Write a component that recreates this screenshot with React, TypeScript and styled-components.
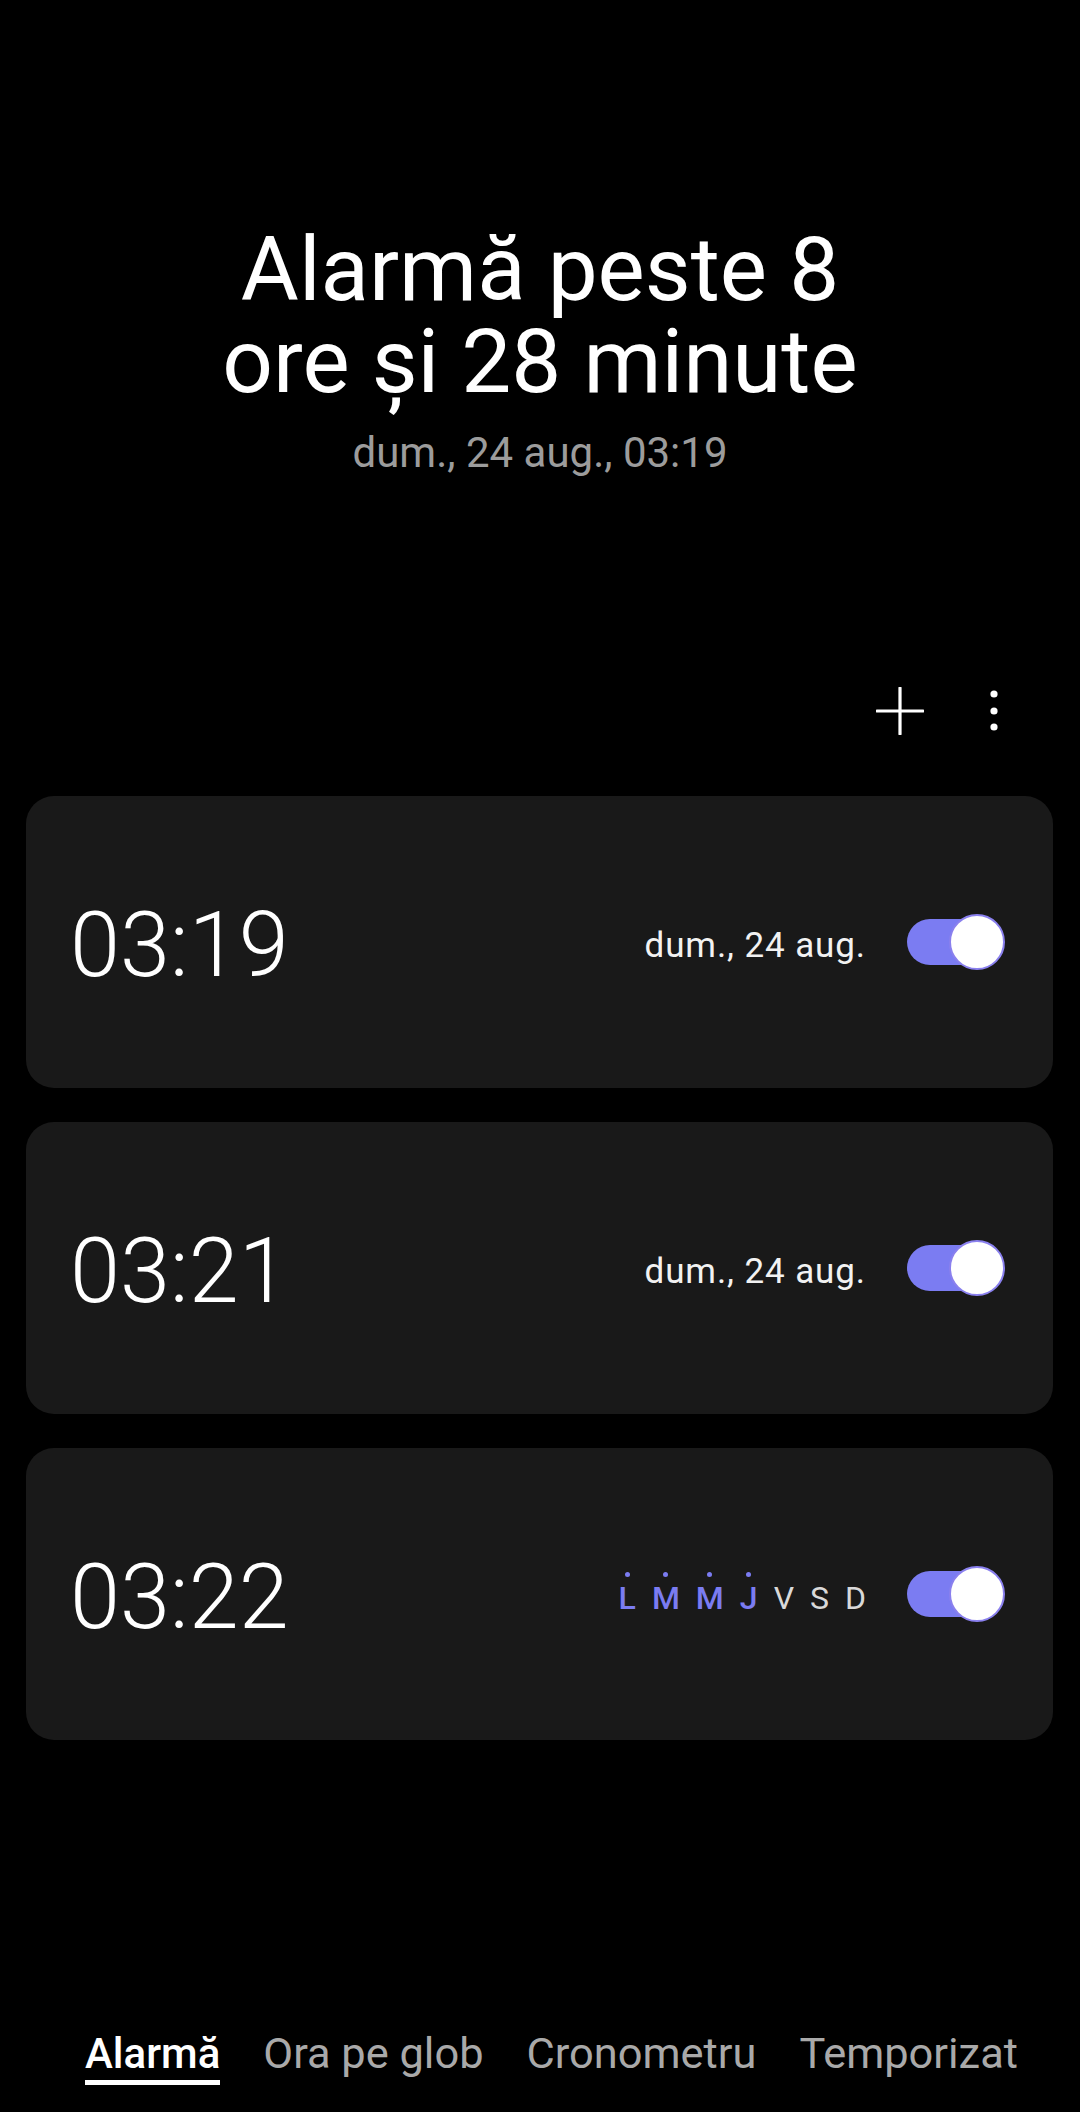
import * as React from 'react'
import styled, { createGlobalStyle } from 'styled-components'

interface Day {
  label: string
  active: boolean
}

interface Alarm {
  id: number
  time: string
  date?: string
  days?: Day[]
  enabled: boolean
}

const weekDays: Day[] = [
  { label: 'L', active: true },
  { label: 'M', active: true },
  { label: 'M', active: true },
  { label: 'J', active: true },
  { label: 'V', active: false },
  { label: 'S', active: false },
  { label: 'D', active: false }
]

const alarms: Alarm[] = [
  { id: 1, time: '03:19', date: 'dum., 24 aug.', enabled: true },
  { id: 2, time: '03:21', date: 'dum., 24 aug.', enabled: true },
  { id: 3, time: '03:22', days: weekDays, enabled: true }
]

const tabs = ['Alarmă', 'Ora pe glob', 'Cronometru', 'Temporizat']

export default function App () {
  const [active, setActive] = React.useState(0)

  return (
    <Page>
      <GlobalStyle />
      <Header>
        <TitleLine>Alarmă peste 8</TitleLine>
        <TitleLine>ore și 28 minute</TitleLine>
        <Subtitle>dum., 24 aug., 03:19</Subtitle>
      </Header>

      <Toolbar>
        <IconButton aria-label='Adaugă alarmă'>
          <svg width='48' height='48' viewBox='0 0 48 48'>
            <path d='M24 1v46M1 24h46' stroke='#fff' strokeWidth='3.2' strokeLinecap='round' />
          </svg>
        </IconButton>
        <IconButton aria-label='Mai multe opțiuni'>
          <svg width='10' height='44' viewBox='0 0 10 44'>
            <circle cx='5' cy='5' r='3.6' fill='#fff' />
            <circle cx='5' cy='22' r='3.6' fill='#fff' />
            <circle cx='5' cy='38' r='3.6' fill='#fff' />
          </svg>
        </IconButton>
      </Toolbar>

      <List>
        {alarms.map(a => (
          <Card key={a.id}>
            <Time>{a.time}</Time>
            <Right>
              {a.date && <DateText>{a.date}</DateText>}
              {a.days && (
                <Days>
                  {a.days.map((d, i) => (
                    <DayLetter key={i} active={d.active}>{d.label}</DayLetter>
                  ))}
                </Days>
              )}
              <Switch on={a.enabled}>
                <Knob />
              </Switch>
            </Right>
          </Card>
        ))}
      </List>

      <TabBar>
        {tabs.map((t, i) => (
          <Tab key={t} selected={i === active} onClick={() => setActive(i)}>
            {t}
          </Tab>
        ))}
      </TabBar>
    </Page>
  )
}

const GlobalStyle = createGlobalStyle`
  html, body {
    margin: 0;
    padding: 0;
    background: #000;
  }
  body {
    font-family: Roboto, "Noto Sans", sans-serif;
    color: #fff;
  }
`

const Page = styled.div`
  width: 1080px;
  height: 2112px;
  display: flex;
  flex-direction: column;
  background: #000;
  overflow: hidden;
`

const Header = styled.div`
  padding-top: 224px;
  display: flex;
  flex-direction: column;
  align-items: center;
`

const TitleLine = styled.div`
  height: 92px;
  font-size: 89px;
  line-height: 92px;
  font-weight: 400;
  text-align: center;
  color: #fff;
  white-space: nowrap;
`

const Subtitle = styled.div`
  margin-top: 21px;
  font-size: 42px;
  line-height: 48px;
  color: #9c9c9c;
`

const Toolbar = styled.div`
  margin-top: 194px;
  height: 80px;
  display: flex;
  justify-content: flex-end;
  align-items: center;
  gap: 46px;
  padding-right: 62px;
`

const IconButton = styled.button`
  width: 48px;
  height: 48px;
  padding: 0;
  border: 0;
  background: none;
  display: flex;
  align-items: center;
  justify-content: center;
  cursor: pointer;
`

const List = styled.div`
  margin-top: 45px;
  padding: 0 27px 0 26px;
  display: flex;
  flex-direction: column;
  gap: 34px;
`

const Card = styled.div`
  height: 292px;
  border-radius: 28px;
  background: #191919;
  display: flex;
  align-items: center;
  justify-content: space-between;
  padding: 0 48px 0 44px;
`

const Time = styled.div`
  font-size: 90px;
  font-weight: 300;
  line-height: 1;
  color: #fff;
  margin-top: 8px;
`

const Right = styled.div`
  display: flex;
  align-items: center;
  gap: 41px;
`

const DateText = styled.div`
  font-size: 35px;
  letter-spacing: 0.9px;
  color: #f2f2f2;
  margin-top: 6px;
`

const Days = styled.div`
  display: flex;
  align-items: flex-end;
  gap: 16px;
  margin-top: 8px;
`

const DayLetter = styled.span<{ active: boolean }>`
  position: relative;
  font-size: 32px;
  line-height: 36px;
  font-weight: ${p => (p.active ? 500 : 400)};
  color: ${p => (p.active ? '#7b7cf2' : '#d9d9d9')};

  &::before {
    content: '';
    display: ${p => (p.active ? 'block' : 'none')};
    position: absolute;
    top: -8px;
    left: 50%;
    width: 5px;
    height: 5px;
    margin-left: -2.5px;
    border-radius: 50%;
    background: #7b7cf2;
  }
`

const Switch = styled.div<{ on: boolean }>`
  position: relative;
  width: 93px;
  height: 46px;
  border-radius: 23px;
  background: ${p => (p.on ? '#7b7cf2' : '#555')};
  margin-right: 5px;
`

const Knob = styled.div`
  position: absolute;
  top: 50%;
  right: -5px;
  width: 52px;
  height: 52px;
  margin-top: -28px;
  border-radius: 50%;
  background: #fff;
  border: 2px solid #8a80ee;
`

const TabBar = styled.div`
  margin-top: auto;
  display: flex;
  gap: 43px;
  padding: 0 0 27px 85px;
`

const Tab = styled.div<{ selected: boolean }>`
  font-size: ${p => (p.selected ? 42 : 43.4)}px;
  line-height: 50px;
  font-weight: ${p => (p.selected ? 500 : 400)};
  color: ${p => (p.selected ? '#fff' : '#a9a9a9')};
  padding-bottom: 1px;
  border-bottom: 5px solid ${p => (p.selected ? '#fff' : 'transparent')};
  white-space: nowrap;
  cursor: pointer;
`
